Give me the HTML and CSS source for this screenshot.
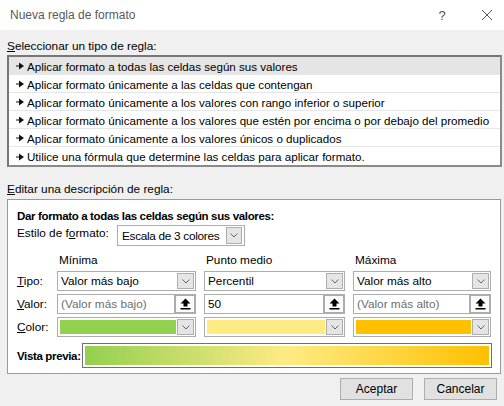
FILE: index.html
```html
<!DOCTYPE html>
<html lang="es">
<head>
<meta charset="utf-8">
<title>Nueva regla de formato</title>
<link rel="stylesheet" href="styles.css">
</head>
<body>
<div class="dialog">
  <div class="titlebar">
    <span class="title">Nueva regla de formato</span>
    <span class="help">?</span>
    <span class="close"><svg width="12" height="12" viewBox="0 0 12 12"><path d="M1 1 L11 11 M11 1 L1 11" stroke="#555" stroke-width="1" fill="none"/></svg></span>
  </div>
  <div class="content">
    <div class="section-label"><u>S</u>eleccionar un tipo de regla:</div>
    <ul class="rule-list">
      <li class="rule selected"><svg class="arrow" width="8" height="8" viewBox="0 0 8 8"><path d="M0 3.4 H3.5 V4.6 H0 Z M3 0.5 L8 4 L3 7.5 Z" fill="#111"/></svg>Aplicar formato a todas las celdas según sus valores</li>
      <li class="rule"><svg class="arrow" width="8" height="8" viewBox="0 0 8 8"><path d="M0 3.4 H3.5 V4.6 H0 Z M3 0.5 L8 4 L3 7.5 Z" fill="#111"/></svg>Aplicar formato únicamente a las celdas que contengan</li>
      <li class="rule"><svg class="arrow" width="8" height="8" viewBox="0 0 8 8"><path d="M0 3.4 H3.5 V4.6 H0 Z M3 0.5 L8 4 L3 7.5 Z" fill="#111"/></svg>Aplicar formato únicamente a los valores con rango inferior o superior</li>
      <li class="rule"><svg class="arrow" width="8" height="8" viewBox="0 0 8 8"><path d="M0 3.4 H3.5 V4.6 H0 Z M3 0.5 L8 4 L3 7.5 Z" fill="#111"/></svg>Aplicar formato únicamente a los valores que estén por encima o por debajo del promedio</li>
      <li class="rule"><svg class="arrow" width="8" height="8" viewBox="0 0 8 8"><path d="M0 3.4 H3.5 V4.6 H0 Z M3 0.5 L8 4 L3 7.5 Z" fill="#111"/></svg>Aplicar formato únicamente a los valores únicos o duplicados</li>
      <li class="rule last"><svg class="arrow" width="8" height="8" viewBox="0 0 8 8"><path d="M0 3.4 H3.5 V4.6 H0 Z M3 0.5 L8 4 L3 7.5 Z" fill="#111"/></svg>Utilice una fórmula que determine las celdas para aplicar formato.</li>
    </ul>
    <div class="section-label second"><u>E</u>ditar una descripción de regla:</div>
    <div class="desc">
      <div class="desc-title">Dar formato a todas las celdas según sus valores:</div>
      <div class="style-row">
        <span class="style-label">Estilo de f<u>o</u>rmato:</span>
        <div class="combo style-combo">
          <span class="combo-text">Escala de 3 colores</span>
          <span class="drop"><svg width="8" height="5" viewBox="0 0 8 5"><path d="M0.5 0.5 L4 4 L7.5 0.5" stroke="#666" stroke-width="1" fill="none"/></svg></span>
        </div>
      </div>
      <div class="grid">
        <div class="cell"></div>
        <div class="head">Mínima</div>
        <div class="head">Punto medio</div>
        <div class="head">Máxima</div>

        <div class="label"><u>T</u>ipo:</div>
        <div class="combo"><span class="combo-text">Valor más bajo</span><span class="drop"><svg width="8" height="5" viewBox="0 0 8 5"><path d="M0.5 0.5 L4 4 L7.5 0.5" stroke="#666" stroke-width="1" fill="none"/></svg></span></div>
        <div class="combo"><span class="combo-text">Percentil</span><span class="drop"><svg width="8" height="5" viewBox="0 0 8 5"><path d="M0.5 0.5 L4 4 L7.5 0.5" stroke="#666" stroke-width="1" fill="none"/></svg></span></div>
        <div class="combo"><span class="combo-text">Valor más alto</span><span class="drop"><svg width="8" height="5" viewBox="0 0 8 5"><path d="M0.5 0.5 L4 4 L7.5 0.5" stroke="#666" stroke-width="1" fill="none"/></svg></span></div>

        <div class="label"><u>V</u>alor:</div>
        <div class="input"><span class="input-text muted">(Valor más bajo)</span><span class="ref"><svg width="11" height="12" viewBox="0 0 11 12"><path d="M5.5 0.5 L10.5 5.5 H7.5 V8.5 H3.5 V5.5 H0.5 Z" fill="#000"/><rect x="0.5" y="10" width="10" height="1.5" fill="#000"/></svg></span></div>
        <div class="input"><span class="input-text">50</span><span class="ref"><svg width="11" height="12" viewBox="0 0 11 12"><path d="M5.5 0.5 L10.5 5.5 H7.5 V8.5 H3.5 V5.5 H0.5 Z" fill="#000"/><rect x="0.5" y="10" width="10" height="1.5" fill="#000"/></svg></span></div>
        <div class="input"><span class="input-text muted">(Valor más alto)</span><span class="ref"><svg width="11" height="12" viewBox="0 0 11 12"><path d="M5.5 0.5 L10.5 5.5 H7.5 V8.5 H3.5 V5.5 H0.5 Z" fill="#000"/><rect x="0.5" y="10" width="10" height="1.5" fill="#000"/></svg></span></div>

        <div class="label"><u>C</u>olor:</div>
        <div class="combo"><span class="swatch green"></span><span class="drop"><svg width="8" height="5" viewBox="0 0 8 5"><path d="M0.5 0.5 L4 4 L7.5 0.5" stroke="#666" stroke-width="1" fill="none"/></svg></span></div>
        <div class="combo"><span class="swatch yellow"></span><span class="drop"><svg width="8" height="5" viewBox="0 0 8 5"><path d="M0.5 0.5 L4 4 L7.5 0.5" stroke="#666" stroke-width="1" fill="none"/></svg></span></div>
        <div class="combo"><span class="swatch gold"></span><span class="drop"><svg width="8" height="5" viewBox="0 0 8 5"><path d="M0.5 0.5 L4 4 L7.5 0.5" stroke="#666" stroke-width="1" fill="none"/></svg></span></div>
      </div>
      <div class="preview-row">
        <span class="preview-label">Vista previa:</span>
        <div class="preview"><div class="gradient"></div></div>
      </div>
    </div>
    <div class="buttons">
      <button class="btn">Aceptar</button>
      <button class="btn">Cancelar</button>
    </div>
  </div>
</div>
</body>
</html>
```
FILE: styles.css
```css
* { box-sizing: border-box; }
html, body {
  margin: 0;
  padding: 0;
  width: 504px;
  height: 406px;
  overflow: hidden;
  font-family: "Liberation Sans", Arial, sans-serif;
  font-size: 11.8px;
  color: #000;
}
.dialog {
  width: 504px;
  height: 406px;
  background: #f0f0f0;
  display: flex;
  flex-direction: column;
}
.titlebar {
  height: 30px;
  background: #fff;
  display: flex;
  align-items: center;
  padding-left: 10px;
  flex-shrink: 0;
}
.title {
  color: #5a5a5a;
  font-size: 12px;
  flex: 1;
}
.help {
  color: #555;
  font-size: 13px;
  width: 56px;
  text-align: center;
}
.close {
  width: 34px;
  display: flex;
  justify-content: center;
  align-items: center;
}
.content {
  padding: 8px 2px 0 7px;
  display: flex;
  flex-direction: column;
}
.section-label {
  line-height: 16px;
  height: 16px;
  margin-bottom: 1px;
}
.section-label.second {
  margin-top: 14px;
  margin-bottom: 2px;
}
.rule-list {
  list-style: none;
  margin: 0;
  padding: 0;
  border: 2px solid #777;
  border-right-color: #8a8a8a;
  border-bottom-color: #8a8a8a;
  background: #fff;
  height: 112px;
  font-size: 11.6px;
}
.rule {
  height: 18px;
  line-height: 17px;
  padding: 1px 0 0 7px;
  border-bottom: 1px solid #e6e6e6;
  display: flex;
  align-items: center;
  white-space: nowrap;
}
.rule.last { border-bottom: none; }
.rule.selected { background: #e5e5e5; }
.arrow { margin-right: 3px; flex-shrink: 0; }
.desc {
  width: 494px;
  height: 175px;
  border: 1px solid #9a9a9a;
  background: #fff;
  padding: 9px 0 0 9px;
}
.desc-title {
  font-weight: bold;
  font-size: 11.5px;
  letter-spacing: -0.35px;
  line-height: 15px;
  height: 15px;
  white-space: nowrap;
}
.style-row {
  display: flex;
  align-items: flex-start;
  margin-top: 1px;
  height: 21px;
}
.style-label {
  width: 100px;
  line-height: 16px;
  white-space: nowrap;
}
.combo, .input {
  border: 1px solid #adadad;
  background: #fff;
  height: 20px;
  display: flex;
  align-items: center;
}
.style-combo {
  width: 128px;
  height: 21px;
}
.combo-text, .input-text {
  flex: 1;
  padding-left: 3px;
  white-space: nowrap;
  overflow: hidden;
}
.style-combo .combo-text { padding-left: 4px; letter-spacing: -0.3px; }
.muted { color: #6d6d6d; }
.drop {
  width: 17px;
  height: 16px;
  margin-right: 1px;
  border: 1px solid #adadad;
  background: #e5e5e5;
  display: flex;
  align-items: center;
  justify-content: center;
  flex-shrink: 0;
}
.style-combo .drop { width: 16px; height: 17px; margin-right: 2px; }
.ref {
  width: 22px;
  height: 20px;
  margin: -1px -1px -1px 0;
  border: 2px solid #adadad;
  background: #fcfcfc;
  display: flex;
  align-items: center;
  justify-content: center;
  flex-shrink: 0;
}
.grid {
  display: grid;
  grid-template-columns: 32px 139px 141px 138px;
  grid-template-rows: 16px 20px 20px 20px;
  column-gap: 8px;
  row-gap: 3px;
  margin-top: 6px;
}
.grid .cell, .grid .head { line-height: 16px; }
.head { padding-left: 2px; margin-bottom: -1px; white-space: nowrap; }
.label { line-height: 20px; white-space: nowrap; }
.swatch {
  flex: 1;
  height: 14px;
  margin: 0 1px 0 2px;
}
.green { background: #92d050; }
.yellow { background: #ffeb84; }
.gold { background: #ffc000; }
.preview-row {
  display: flex;
  align-items: center;
  margin-top: 6px;
  height: 25px;
}
.preview-label {
  font-weight: bold;
  font-size: 11.5px;
  letter-spacing: -0.35px;
  width: 65px;
  white-space: nowrap;
}
.preview {
  width: 410px;
  height: 25px;
  border: 1px solid #707070;
  background: #fff;
  padding: 2px;
}
.gradient {
  width: 100%;
  height: 100%;
  background: linear-gradient(to right, #92d050 0%, #ffeb84 50%, #ffc000 100%);
}
.buttons {
  display: flex;
  justify-content: flex-end;
  gap: 11px;
  margin-top: 4px;
  padding-right: 5px;
}
.btn {
  width: 73px;
  height: 22px;
  border: 1px solid #adadad;
  background: #e1e1e1;
  font-family: "Liberation Sans", Arial, sans-serif;
  font-size: 12px;
  color: #000;
  padding: 0;
}
```
